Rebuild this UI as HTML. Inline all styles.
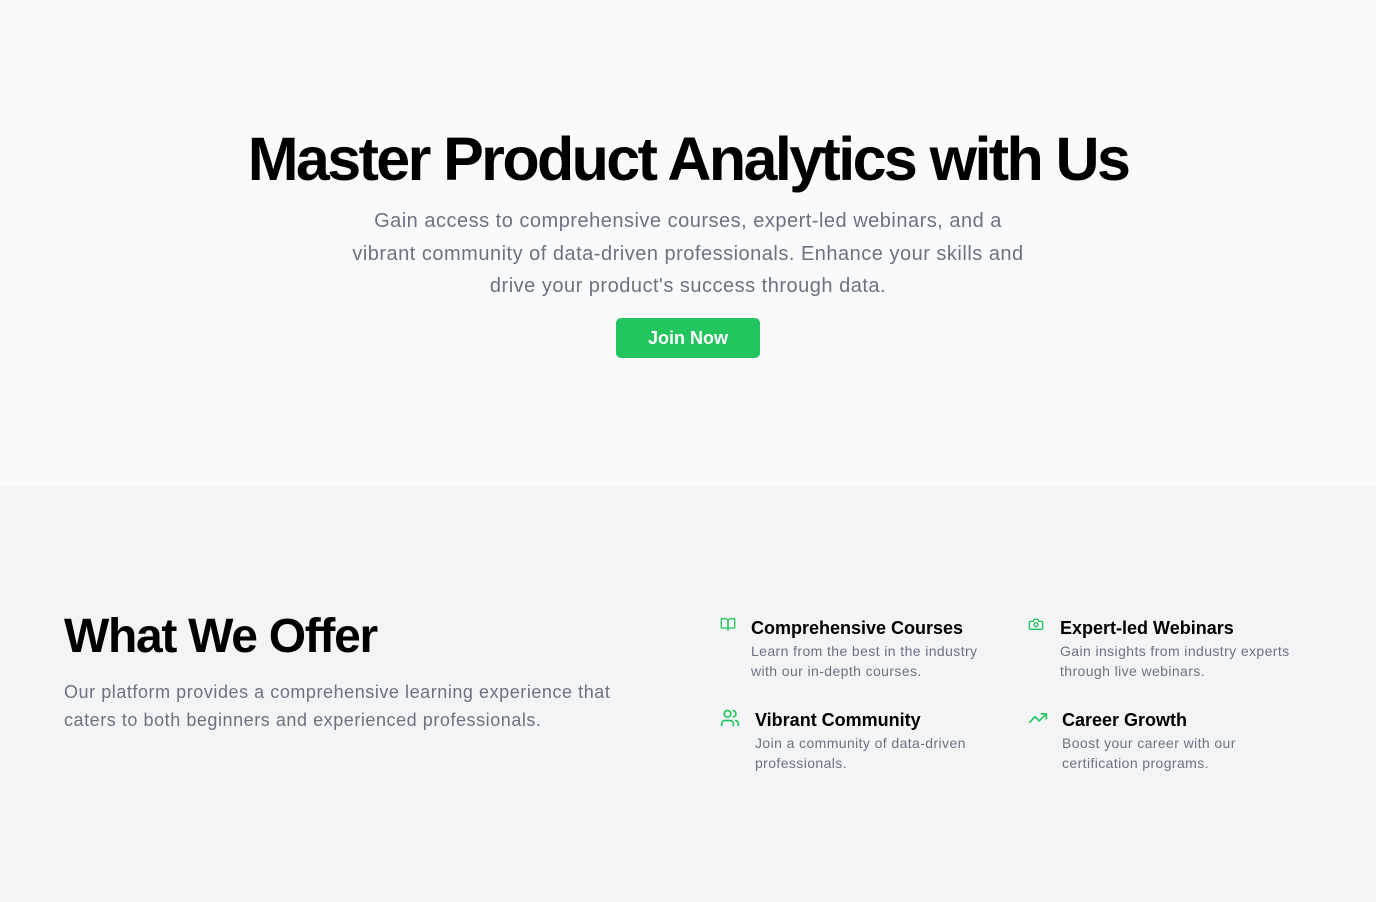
<!DOCTYPE html>
<html><head><meta charset="utf-8"><style>
*{margin:0;padding:0;box-sizing:border-box}
body{width:1376px;height:902px;overflow:hidden;font-family:"Liberation Sans",sans-serif;background:#f9fafb}
.hero{height:486px;background:#f8fafc;text-align:center;position:relative}
h1{position:absolute;left:0;right:0;top:122px;font-size:61px;font-weight:700;letter-spacing:-2.6px;color:#000;line-height:74px}
.sub{position:absolute;left:288px;width:800px;top:205px;font-size:20px;line-height:32.5px;color:#6b7280;letter-spacing:0.5px}
.btn{position:absolute;left:616px;top:318px;width:144px;height:40px;background:#22c55e;border-radius:5px;color:#fff;font-weight:700;font-size:18px;line-height:40px}
.sec{position:absolute;top:486px;left:0;width:1376px;height:416px;background:#f3f4f6}
h2{position:absolute;left:64px;top:121px;font-size:48px;letter-spacing:-1.3px;font-weight:700;color:#000;line-height:60px}
.p2{position:absolute;left:64px;top:192px;width:680px;font-size:18px;line-height:28px;color:#6b7280;letter-spacing:0.55px}
.f{position:absolute}
.f svg{position:absolute;left:0;top:0}
.f h3{font-size:18px;font-weight:700;color:#000;line-height:24px}
.f p{font-size:14px;line-height:20px;color:#6b7280;margin-top:1px;letter-spacing:0.4px}
</style></head><body>
<div class="hero">
<h1>Master Product Analytics with Us</h1>
<div class="sub">Gain access to comprehensive courses, expert-led webinars, and a<br>vibrant community of data-driven professionals. Enhance your skills and<br>drive your product's success through data.</div>
<div class="btn">Join Now</div>
</div>
<div class="sec">
<h2>What We Offer</h2>
<div class="p2">Our platform provides a comprehensive learning experience that<br>caters to both beginners and experienced professionals.</div>

<div class="f" style="left:720px;top:130px">
<svg width="16" height="16" viewBox="0 0 24 24" fill="none" stroke="#22c55e" stroke-width="2" stroke-linecap="round" stroke-linejoin="round"><path d="M2 4h6a4 4 0 0 1 4 4v13a3 3 0 0 0-3-3H2z"/><path d="M22 4h-6a4 4 0 0 0-4 4v13a3 3 0 0 1 3-3h7z"/></svg>
<div style="margin-left:31px"><h3>Comprehensive Courses</h3><p>Learn from the best in the industry<br>with our in-depth courses.</p></div></div>

<div class="f" style="left:1028px;top:130px">
<svg width="16" height="16" viewBox="0 0 24 24" fill="none" stroke="#22c55e" stroke-width="2" stroke-linecap="round" stroke-linejoin="round"><path d="M14.5 5h-5L7.5 8H4a2 2 0 0 0-2 2v8a2 2 0 0 0 2 2h16a2 2 0 0 0 2-2v-8a2 2 0 0 0-2-2h-3.5z"/><circle cx="12" cy="13" r="3"/></svg>
<div style="margin-left:32px"><h3>Expert-led Webinars</h3><p>Gain insights from industry experts<br>through live webinars.</p></div></div>

<div class="f" style="left:720px;top:222px">
<svg width="20" height="20" viewBox="0 0 24 24" fill="none" stroke="#22c55e" stroke-width="2" stroke-linecap="round" stroke-linejoin="round"><path d="M16 21v-2a4 4 0 0 0-4-4H6a4 4 0 0 0-4 4v2"/><circle cx="9" cy="7" r="4"/><path d="M22 21v-2a4 4 0 0 0-3-3.9M16 3.1a4 4 0 0 1 0 7.8"/></svg>
<div style="margin-left:35px"><h3>Vibrant Community</h3><p>Join a community of data-driven<br>professionals.</p></div></div>

<div class="f" style="left:1028px;top:222px">
<svg width="20" height="20" viewBox="0 0 24 24" fill="none" stroke="#22c55e" stroke-width="2" stroke-linecap="round" stroke-linejoin="round"><path d="M22 7l-8.5 8.5-5-5L2 17"/><path d="M16 7h6v6"/></svg>
<div style="margin-left:34px"><h3>Career Growth</h3><p>Boost your career with our<br>certification programs.</p></div></div>
</div>
</body></html>
